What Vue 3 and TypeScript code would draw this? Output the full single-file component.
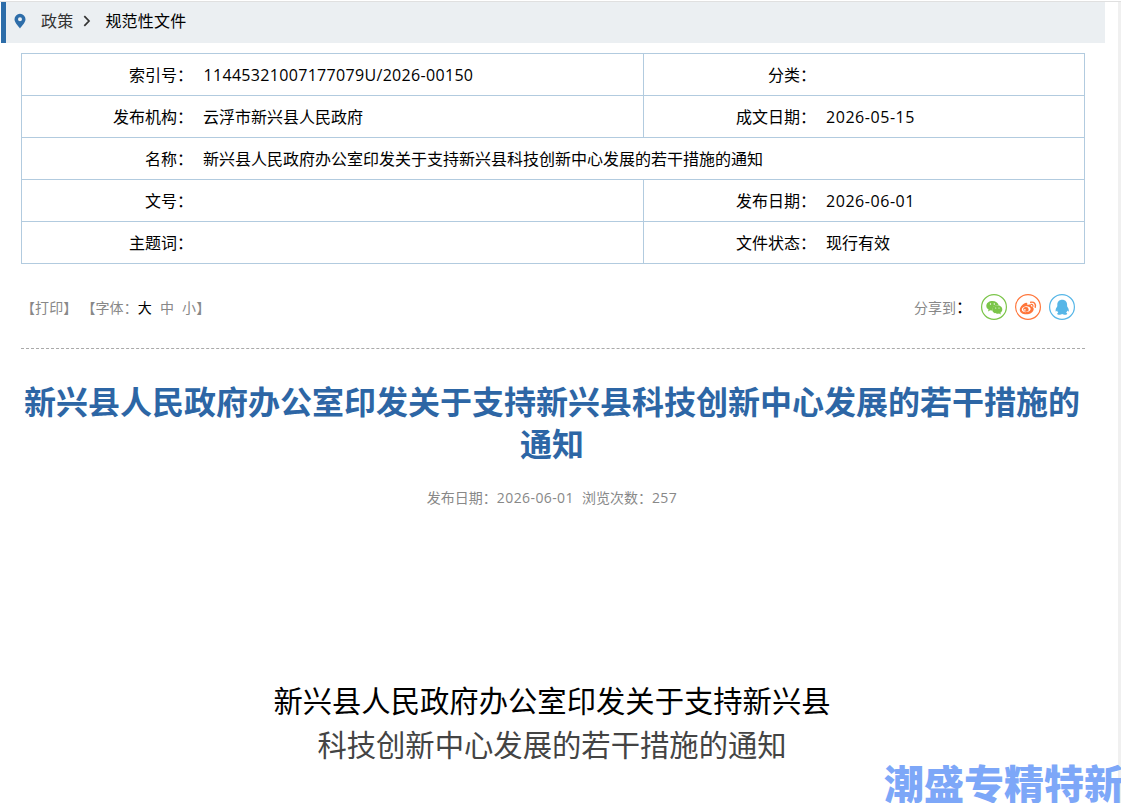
<script setup lang="ts">
interface Cell { label: string; value: string; kind?: string }
const rows: Cell[][] = [
  [{ label: '索引号：', value: '11445321007177079U/2026-00150', kind: 'code' }, { label: '分类：', value: '' }],
  [{ label: '发布机构：', value: '云浮市新兴县人民政府' }, { label: '成文日期：', value: '2026-05-15', kind: 'date' }],
  [{ label: '名称：', value: '新兴县人民政府办公室印发关于支持新兴县科技创新中心发展的若干措施的通知' }],
  [{ label: '文号：', value: '' }, { label: '发布日期：', value: '2026-06-01', kind: 'date' }],
  [{ label: '主题词：', value: '' }, { label: '文件状态：', value: '现行有效' }],
]
</script>

<template>
  <div class="page">
    <main class="main">
      <nav class="crumbs">
        <svg class="pin" width="12" height="16" viewBox="0 0 12 16"><path fill="#2d6da9" fill-rule="evenodd" d="M6 .8a5.500 5.500 0 0 0-5.500 5.500C.5 9.500 3.800 12.500 6 15.500c2.200-3 5.500-6 5.500-9.200A5.500 5.500 0 0 0 6 .8Zm0 3.400a2 2 0 1 1 0 4 2 2 0 0 1 0-4Z" /></svg>
        <span class="crumb">政策</span>
        <svg class="chev" width="8" height="12" viewBox="0 0 8 12"><path d="M1.300 1.200 6 6l-4.700 4.800" fill="none" stroke="#333" stroke-width="1.700" /></svg>
        <span class="current">规范性文件</span>
      </nav>

      <section class="info">
        <div v-for="(row, i) in rows" :key="i" class="row" :class="{ single: row.length === 1 }">
          <div v-for="cell in row" :key="cell.label" class="cell">
            <span class="label">{{ cell.label }}</span>
            <span class="value" :class="cell.kind">{{ cell.value }}</span>
          </div>
        </div>
      </section>

      <div class="tools">
        <span class="print">【打印】</span>
        <span class="size">【字体：<b>大</b><i>中</i><i>小</i>】</span>
        <span class="share">分享到<em>：</em></span>
        <svg class="icon" width="26" height="26" viewBox="0 0 26 26">
          <circle cx="13" cy="13" r="12.400" fill="#fff" stroke="#7bc549" stroke-width="1.200" />
          <path fill="#7bc549" d="M11.500 6.900c-3.500 0-6.200 2.100-6.200 4.900 0 1.600.8 2.900 2.300 3.800l-.6 1.800 2.200-1.100c.8.200 1.500.3 2.200.3-.6-3.300 2.300-5.700 6.200-5.700-.5-2.200-3-4-6.100-4Z" />
          <path fill="#7bc549" d="M16.300 11.300c-2.900 0-5.100 1.800-5.100 4.200s2.200 4.200 5.100 4.200c.6 0 1.200-.1 1.700-.2l1.900 1-.5-1.700c1.200-.8 1.900-1.900 1.900-3.300 0-2.400-2.200-4.200-5-4.200Z" />
          <g fill="#fff"><circle cx="9.500" cy="10" r=".7" /><circle cx="13.300" cy="10" r=".7" /><circle cx="14.700" cy="14" r=".6" /><circle cx="18" cy="14" r=".6" /></g>
        </svg>
        <svg class="icon" width="26" height="26" viewBox="0 0 26 26">
          <circle cx="13" cy="13" r="12.400" fill="#fff" stroke="#ff763b" stroke-width="1.200" />
          <path fill="#ff763b" fill-rule="evenodd" d="M11.900 8.900c.7.500.6 1.200.3 2 1.700-.6 4.100-.9 3.800 1.300 1.400.5 2.700 1.100 2.700 2.700 0 3-3.500 5.400-7.500 5.400-3.600 0-6.400-1.800-6.400-4.600 0-2.900 4.900-7.900 7.100-6.800Zm-.9 3.400c-2.600.2-4.300 1.700-4.200 3.400.1 1.600 2.100 2.600 4.600 2.400 2.500-.3 4.400-1.700 4.200-3.300-.2-1.600-2.100-2.700-4.600-2.500Z" />
          <path fill="#ff763b" fill-rule="evenodd" d="M10.700 13a2.700 2.400 0 1 0 .5 4.800 2.700 2.400 0 0 0-.5-4.800Zm-.8 2.100a.8.800 0 1 1 0 1.600.8.800 0 0 1 0-1.600Z" />
          <g fill="none" stroke="#ff763b" stroke-linecap="round"><path stroke-width="1.400" d="M15.700 8.300c3.500-.8 5.400 1.900 4.500 4.900" /><path stroke-width="1.200" d="M15.900 10.400c1.500-.3 2.400.8 2 2.100" /></g>
        </svg>
        <svg class="icon" width="26" height="26" viewBox="0 0 26 26">
          <circle cx="13" cy="13" r="12.400" fill="#fff" stroke="#56b6e7" stroke-width="1.200" />
          <path fill="#56b6e7" d="M13.200 5.800c-3.200 0-4.900 2.200-4.900 4.900v1.500c-1 1.500-1.900 3.200-1.700 4.700.1.800.6.700 1.500-.4.200.9.600 1.600 1.200 2.200-.8.300-1.200.7-1.100 1.300.2.900 3.700.9 5 0 1.300.9 4.800.9 5 0 .1-.6-.3-1-1.100-1.300.6-.6 1-1.300 1.200-2.200.9 1.100 1.400 1.200 1.500.4.200-1.500-.7-3.200-1.700-4.700v-1.500c0-2.700-1.700-4.900-4.900-4.900Z" />
        </svg>
      </div>

      <article class="article">
        <h1>新兴县人民政府办公室印发关于支持新兴县科技创新中心发展的若干措施的通知</h1>
        <p class="meta"><span>发布日期：<span class="num">2026-06-01</span></span><span>浏览次数：<span class="num">257</span></span></p>
        <p class="doc first">新兴县人民政府办公室印发关于支持新兴县</p>
        <p class="doc second">科技创新中心发展的若干措施的通知</p>
      </article>
    </main>
    <div class="watermark">潮盛专精特新</div>
  </div>
</template>

<style>
body { margin: 0; background: #fff; }
</style>

<style scoped>
.page {
  position: relative;
  box-sizing: border-box;
  width: 1121px;
  height: 803px;
  overflow: hidden;
  padding-top: 1px;
  background: linear-gradient(#e0e0e0, #e0e0e0) 0 1px / 100% 1px no-repeat, linear-gradient(#f0f0f0, #f0f0f0) 1118px 2px / 3px 100% no-repeat, #fff;
  font: 16px/24px "Open Sans", "Noto Sans CJK SC", sans-serif;
  color: #000;
}
.main { padding-top: 1px; }
.crumbs {
  display: flex;
  align-items: center;
  box-sizing: border-box;
  width: 1104px;
  height: 41px;
  margin-left: 1px;
  padding-left: 8px;
  padding-bottom: 3px;
  border-left: 5px solid #2d6da9;
  background: #ebeff2;
}
.crumb { margin-left: 15px; color: #333; letter-spacing: 0.2px; }
.chev { margin: 0 14px 0 10px; }
.current { letter-spacing: 0.2px; }
.info {
  width: 1062px;
  margin: 10px 0 0 21px;
  border: 1px solid #b2cbdf;
}
.row { display: grid; grid-template-columns: 621px 1fr; height: 41px; }
.row + .row { border-top: 1px solid #b2cbdf; }
.row.single { grid-template-columns: 1fr; }
.cell { display: grid; grid-template-columns: 171px 1fr; align-items: center; column-gap: 10px; }
.cell + .cell { grid-template-columns: 172px 1fr; border-left: 1px solid #b2cbdf; }
.label { text-align: right; white-space: nowrap; }
.value { white-space: nowrap; }
.code { padding-left: 0.5px; letter-spacing: 0.32px; }
.date { letter-spacing: 0.55px; }
.tools {
  display: flex;
  align-items: center;
  box-sizing: border-box;
  width: 1064px;
  height: 85px;
  margin-left: 21px;
  padding: 2px 10px 0 0;
  border-bottom: 1px dashed #aaa;
  font-size: 14px;
  color: #888;
}
.print { margin-right: 4px; }
.print, .size { padding-top: 2px; letter-spacing: 0.1px; }
.size b { font-weight: 400; color: #000; }
.size i { font-style: normal; margin-left: 8px; }
.share { margin-left: auto; }
.share em { font-style: normal; font-size: 16px; color: #000; }
.icon { margin-left: 8px; }
.share + .icon { margin-left: 9px; }
.article { width: 1062px; margin-left: 21px; text-align: center; }
h1 { margin: 32px 0 0; font-size: 32px; line-height: 42px; font-weight: 700; color: #2d66a5; }
.meta { display: flex; justify-content: center; gap: 8px; margin: 21px 0 0; font-size: 14px; line-height: 24px; color: #888; }
.num { letter-spacing: 0.4px; }
.doc { margin: 0; font-size: 29.33px; line-height: 44px; }
.first { margin-top: 169px; }
.second { color: #444; }
.watermark {
  position: absolute;
  left: 884px;
  top: 760px;
  font-size: 40px;
  line-height: 48px;
  font-weight: 900;
  white-space: nowrap;
  color: #7da7f8;
}
</style>
